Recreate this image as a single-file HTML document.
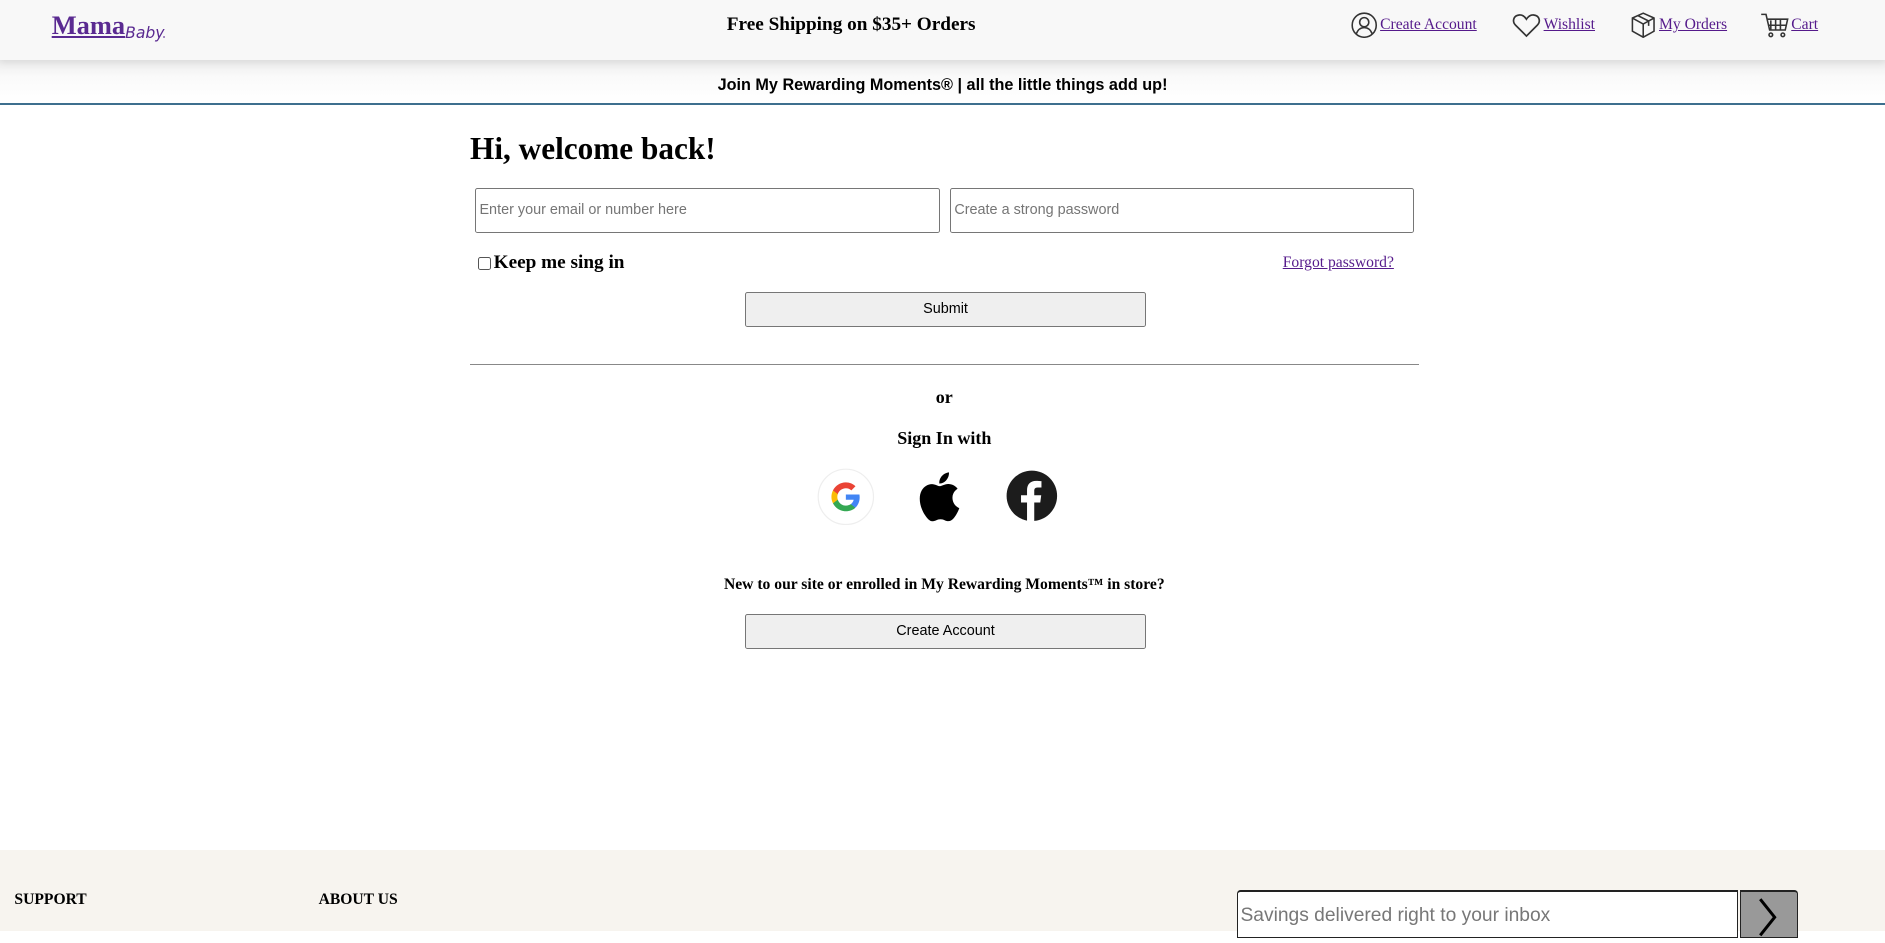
<!DOCTYPE html>
<html><head><meta charset="utf-8"><style>
html{zoom:1.2022}
body{margin:0;width:1568px;height:774px;overflow:hidden;background:#fff;font-family:"Liberation Serif",serif;position:relative}
a{color:#551a8b;text-decoration:underline}
.hdr{position:absolute;left:0;top:0;width:1568px;height:50px;background:#f8f8f8;box-shadow:0 2px 6px rgba(0,0,0,.08);z-index:2}
.logo{position:absolute;left:43px;top:8px;font-size:22px;font-weight:bold;color:#5a2a91;text-decoration:underline}
.logo span{font-family:"DejaVu Sans",cursive;font-weight:normal;font-size:13px;font-style:italic;position:relative;top:4px}
.ship{position:absolute;left:0;width:1416px;top:12px;text-align:center;font-weight:bold;font-size:16px}
.nav{position:absolute;top:10px;font-size:13px;display:flex;align-items:center}
.nav svg{margin-right:2px}
.band{position:absolute;top:50px;left:0;width:1568px;height:36px;background:linear-gradient(#ececec,#fafafa 40%,#fff);border-bottom:2px solid #3d6f8e;text-align:center;font:bold 13.5px "Liberation Sans",sans-serif;line-height:43px}
h1{position:absolute;left:391px;top:109px;margin:0;font-size:26px}
input.t{position:absolute;top:156px;height:38px;box-sizing:border-box;border:1px solid #767676;border-radius:2px;font:12px "Liberation Sans",sans-serif;padding:0 3px}
input.t::placeholder{color:#757575}
.btn{position:absolute;left:620px;width:333px;height:29px;box-sizing:border-box;background:#efefef;border:1px solid #767676;border-radius:2px;font:12px "Liberation Sans",sans-serif;text-align:center;line-height:28px}
.c{position:absolute;left:391px;width:789px;text-align:center;font-weight:bold}
.ft{position:absolute;top:707px;left:0;width:1568px;height:67px;background:#f7f4ef}
.ft b{position:absolute;top:34px;font-size:13px}
</style></head><body>
<div class="hdr">
<a class="logo">Mama<span>Baby</span></a>
<div class="ship">Free Shipping on $35+ Orders</div>
<div class="nav" style="left:1124px"><svg width="22" height="22" viewBox="0 0 22 22" fill="none" stroke="#333" stroke-width="1.3"><circle cx="11" cy="11" r="10"/><circle cx="11" cy="8.5" r="3.8"/><path d="M4.5 18c1.5-4 4-5 6.5-5s5 1 6.5 5"/></svg><a>Create Account</a></div>
<div class="nav" style="left:1258px"><svg width="24" height="22" viewBox="0 0 24 22" fill="none" stroke="#333" stroke-width="1.4"><path d="M12 20L3 11C0 8 1 3 6 2.5c3-.3 5 2 6 3.5c1-1.5 3-3.8 6-3.5c5 .5 6 5.5 3 8.5z"/></svg><a>Wishlist</a></div>
<div class="nav" style="left:1356px"><svg width="22" height="22" viewBox="0 0 22 22" fill="none" stroke="#333" stroke-width="1.3"><path d="M11 1l9 4v11l-9 5-9-5V5zM2 5l9 5 9-5M11 10v11M6.5 3l9 4.5v4"/></svg><a>My Orders</a></div>
<div class="nav" style="left:1464px"><svg width="24" height="22" viewBox="0 0 24 22" fill="none" stroke="#333" stroke-width="1.3"><path d="M1 2h4l3 13h13l2-9H6M9 7v8M13 6v9M17 6v9M7 11h15"/><circle cx="9" cy="19" r="1.5"/><circle cx="19" cy="19" r="1.5"/></svg><a>Cart</a></div>
</div>
<div class="band">Join My Rewarding Moments® | all the little things add up!</div>
<h1>Hi, welcome back!</h1>
<input class="t" style="left:395px;width:387px" placeholder="Enter your email or number here">
<input class="t" style="left:790px;width:386px" placeholder="Create a strong password">
<div style="position:absolute;left:398px;top:210px;font-weight:bold;font-size:16px;display:flex;align-items:center"><span style="display:inline-block;width:9px;height:9px;border:1px solid #555;border-radius:2px;margin-right:2px"></span>Keep me sing in</div>
<a style="position:absolute;left:1067px;top:211px;font-size:13px">Forgot password?</a>
<div class="btn" style="top:243px">Submit</div>
<div style="position:absolute;left:391px;top:303px;width:789px;border-top:1px solid #888"></div>
<div class="c" style="top:322px;font-size:15px">or</div>
<div class="c" style="top:356px;font-size:15px">Sign In with</div>
<svg style="position:absolute;left:680px;top:389px" width="48" height="48" viewBox="0 0 48 48"><circle cx="24" cy="24" r="23" fill="#fff" stroke="#eee"/><g transform="translate(12 12)"><path d="M23.5 12.3c0-.8-.1-1.6-.2-2.3H12v4.4h6.5c-.3 1.5-1.1 2.7-2.4 3.6v3h3.8c2.3-2.1 3.6-5.1 3.6-8.7z" fill="#4285F4"/><path d="M12 24c3.2 0 6-1.1 7.9-2.9l-3.8-3c-1.1.7-2.4 1.2-4.1 1.2-3.1 0-5.8-2.1-6.7-5H1.3v3.1C3.3 21.3 7.300 24 12 24z" fill="#34A853"/><path d="M5.3 14.3c-.3-.7-.4-1.5-.4-2.3s.1-1.6.4-2.3V6.6h-4C.5 8.2 0 10 0 12s.5 3.8 1.3 5.4z" fill="#FBBC05"/><path d="M12 4.8c1.8 0 3.3.6 4.6 1.8l3.4-3.4C18 1.2 15.2 0 12 0 7.3 0 3.3 2.7 1.3 6.6l4 3.1c.9-2.8 3.6-4.9 6.7-4.9z" fill="#EA4335"/></g></svg>
<svg style="position:absolute;left:763px;top:392px" width="36" height="42" viewBox="0 0 36 42"><path d="M29.5 22.3c0-5 4.1-7.4 4.3-7.5-2.4-3.4-6-3.9-7.3-4-3.1-.3-6 1.8-7.6 1.8s-4-1.8-6.6-1.7C8.9 11 5.8 13 4 16c-3.6 6.3-.9 15.5 2.6 20.6 1.7 2.5 3.7 5.3 6.4 5.2 2.6-.1 3.5-1.7 6.6-1.7s4 1.7 6.6 1.6c2.8 0 4.5-2.5 6.2-5 1.9-2.9 2.7-5.7 2.8-5.8-.1 0-5.6-2.1-5.700-8.6zM24.5 7.5c1.4-1.7 2.3-4 2.1-6.4-2 .1-4.5 1.4-5.9 3.1-1.3 1.5-2.4 3.9-2.1 6.2 2.2.2 4.5-1.2 5.9-2.9z" fill="#000"/></svg>
<svg style="position:absolute;left:837px;top:391px" width="43" height="43" viewBox="0 0 43 43"><circle cx="21.5" cy="21.5" r="21" fill="#1c1c1c"/><path d="M23.5 43V27h5l.8-6h-5.8v-3.5c0-1.7.5-2.9 2.9-2.9h3.1V9.3c-.5-.1-2.4-.3-4.5-.3-4.5 0-7.5 2.7-7.5 7.7V21h-5v6h5v16z" fill="#fff"/></svg>
<div class="c" style="top:479px;font-size:13px">New to our site or enrolled in My Rewarding Moments™ in store?</div>
<div class="btn" style="top:511px">Create Account</div>
<div class="ft">
<b style="left:12px">SUPPORT</b><b style="left:265px">ABOUT US</b>
<div style="position:absolute;left:1029px;top:33px;width:417px;height:40px;box-sizing:border-box;background:#fff;border:1px solid #222;border-top:2px solid #222;border-radius:3px 0 0 0;font:16px 'Liberation Sans',sans-serif;color:#777;padding:11px 2px">Savings delivered right to your inbox</div>
<div style="position:absolute;left:1447px;top:33px;width:49px;height:40px;box-sizing:border-box;background:#999;border:1px solid #222;border-top:2px solid #222;border-radius:0 3px 0 0"><svg width="47" height="38" viewBox="0 0 47 38"><path d="M16 6l12 15-12 15" fill="none" stroke="#000" stroke-width="2.5"/></svg></div>
</div>
</body></html>
